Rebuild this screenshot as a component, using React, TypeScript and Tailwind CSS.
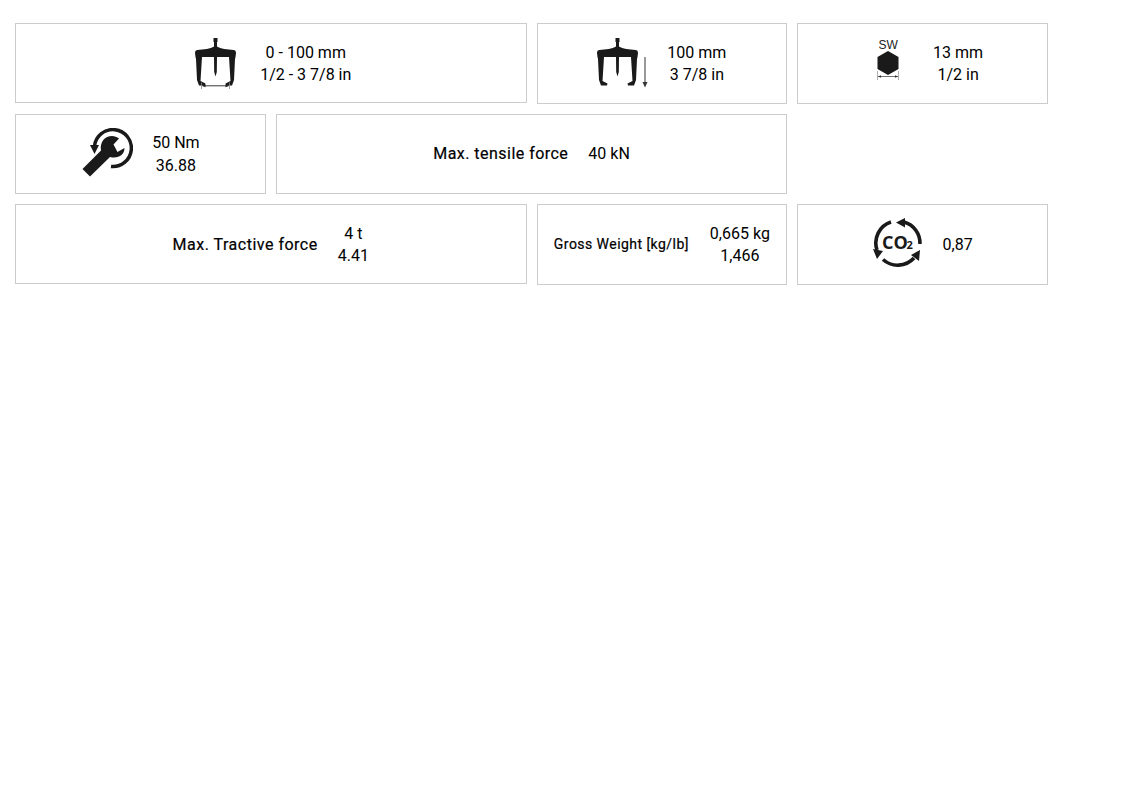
const card = "border border-[#cccccc] bg-white flex items-center justify-center text-center text-[16px] leading-[22px] text-black"

function PullerBody() {
  return (
    <path
      fill="#1a1a1a"
      d="M18 0 H22 V4 H21.500 V8.500 C25 11 32 11.500 38 12 C39.500 12 40.500 13 40.500 15 L40 19 L39.500 21 L38.500 42 L36.500 47.500 L30.500 47.500 L30 45.500 L35 43 L33.500 19 L21.500 19 L21.300 34 L20 38.500 L18.700 34 L18.500 19 L6.500 19 L5 43 L10 45.500 L9.500 47.500 L3.500 47.500 L1.500 42 L0.500 21 L0 19 L-0.500 15 C-0.500 13 0.500 12 2 12 C8 11.500 15 11 18.500 8.500 V4 H18 Z"
    />
  )
}

function PullerWidth() {
  return (
    <svg width="41" height="52" viewBox="-0.5 0 41 52" className="shrink-0">
      <PullerBody />
      <path d="M6 44.500 V51 M34 44.500 V51" stroke="#888" strokeWidth="0.8" fill="none" />
      <path d="M7 47.800 H33" stroke="#222" strokeWidth="0.9" fill="none" />
      <path d="M6.500 47.800 L10 46.300 V49.300 Z M33.500 47.800 L30 46.300 V49.300 Z" fill="#222" />
    </svg>
  )
}

function PullerDepth() {
  return (
    <svg width="52" height="52" viewBox="-0.5 0 52 52" className="shrink-0">
      <PullerBody />
      <path d="M47.500 19 V46" stroke="#333" strokeWidth="1" fill="none" />
      <path d="M45 44 L47.500 49.500 L50 44 Z" fill="#333" />
    </svg>
  )
}

function HexIcon() {
  return (
    <div className="flex flex-col items-center shrink-0 mb-[6px]">
      <span className="font-['Liberation_Sans',sans-serif] text-[12px] leading-[14px] text-[#222]">SW</span>
      <svg width="24" height="32" viewBox="0 0 24 32" className="-mt-[1px]">
        <path d="M12 0 L22.500 6 V18 L12 24 L1.500 18 V6 Z" fill="#1a1a1a" />
        <path d="M1.500 20 V29 M22.500 20 V29" stroke="#999" strokeWidth="0.8" fill="none" />
        <path d="M2 25.500 H22" stroke="#333" strokeWidth="0.7" fill="none" />
        <path d="M2 25.500 L5 24.200 V26.800 Z M22 25.500 L19 24.200 V26.800 Z" fill="#333" />
      </svg>
    </div>
  )
}

function TorqueIcon() {
  return (
    <svg width="52" height="50" viewBox="0 0 52 50" className="shrink-0 mb-[3px]">
      <path d="M13.500 18 A18.500 18.500 0 1 1 30 38.500" fill="none" stroke="#1a1a1a" strokeWidth="3.500" />
      <path d="M9 17 L18 17 L13.500 26 Z" fill="#1a1a1a" />
      <path d="M1.500 41 L20 22.500 C18.500 14 24 8 31 8 C33.500 8 36 9 38 10.500 L32.500 16.500 L36.500 24 L43.500 20 C43.500 27 37 31 29 29 L9 48.500 Z" fill="#1a1a1a" />
    </svg>
  )
}

function Co2Icon() {
  return (
    <svg width="50" height="50" viewBox="0 0 50 50" className="shrink-0 mb-[3px]">
      <g fill="none" stroke="#1a1a1a" strokeWidth="3.600">
        <path d="M31 4 A22 22 0 0 1 47 26" />
        <path d="M18 4 A22 22 0 0 0 4 32" />
        <path d="M10 41.500 A22 22 0 0 0 41 40" />
      </g>
      <path d="M23 4.500 L32 0 L32 9.500 Z" fill="#1a1a1a" />
      <path d="M47 32 L38 37 L46 43 Z" fill="#1a1a1a" />
      <path d="M0 31 L10 33 L4 41 Z" fill="#1a1a1a" />
      <text x="9" y="31" fontFamily="'Open Sans', sans-serif" fontWeight="700" fontSize="18" fill="#1a1a1a">CO</text>
      <text x="33.500" y="31" fontFamily="'Open Sans', sans-serif" fontWeight="700" fontSize="11" fill="#1a1a1a">2</text>
    </svg>
  )
}

export default function App() {
  return (
    <div className="min-h-[793px] bg-white pt-[23px] pl-[15px] font-['Roboto',sans-serif]">
      <div className="grid w-[1033px] grid-cols-4 gap-x-[10px] gap-y-[10px] items-start">
        <div className={`${card} col-span-2 h-[80px] gap-[24px] pl-[5px] pt-[1px]`}>
          <PullerWidth />
          <div className="w-[92px]">
            <div>0 - 100 mm</div>
            <div>1/2 - 3 7/8 in</div>
          </div>
        </div>
        <div className={`${card} h-[81px] gap-[18px] pt-[1px]`}>
          <PullerDepth />
          <div>
            <div>100 mm</div>
            <div>3 7/8 in</div>
          </div>
        </div>
        <div className={`${card} h-[81px] gap-[33px] pl-[14px]`}>
          <HexIcon />
          <div>
            <div>13 mm</div>
            <div>1/2 in</div>
          </div>
        </div>

        <div className={`${card} h-[80px] gap-[19px] leading-[23px]`}>
          <TorqueIcon />
          <div>
            <div>50 Nm</div>
            <div>36.88</div>
          </div>
        </div>
        <div className={`${card} col-span-2 h-[80px] gap-[20px]`}>
          <div className="tracking-[0.47px] [-webkit-text-stroke:0.2px_black]">Max. tensile force</div>
          <div>40 kN</div>
        </div>
        <div />

        <div className={`${card} col-span-2 h-[80px] gap-[20px] pt-[1px]`}>
          <div className="tracking-[0.5px] [-webkit-text-stroke:0.2px_black]">Max. Tractive force</div>
          <div>
            <div>4 t</div>
            <div>4.41</div>
          </div>
        </div>
        <div className={`${card} h-[81px] gap-[21px]`}>
          <div className="text-[14px] tracking-[0.45px] mb-[1px] [-webkit-text-stroke:0.2px_black]">Gross Weight [kg/lb]</div>
          <div>
            <div>0,665 kg</div>
            <div>1,466</div>
          </div>
        </div>
        <div className={`${card} h-[81px] gap-[20px]`}>
          <Co2Icon />
          <div>0,87</div>
        </div>
      </div>
    </div>
  )
}
